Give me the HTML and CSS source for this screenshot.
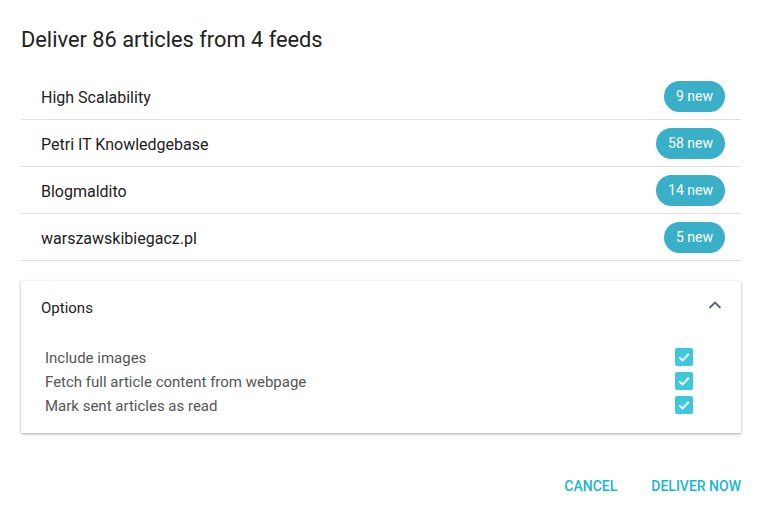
FILE: index.html
```html
<!DOCTYPE html>
<html>
<head>
<meta charset="utf-8">
<link rel="stylesheet" href="styles.css">
</head>
<body>
<div class="dialog">
  <h1 class="title">Deliver 86 articles from 4 feeds</h1>
  <ul class="feeds">
    <li class="feed"><span class="feed-name">High Scalability</span><span class="badge">9 new</span></li>
    <li class="feed"><span class="feed-name">Petri IT Knowledgebase</span><span class="badge">58 new</span></li>
    <li class="feed"><span class="feed-name">Blogmaldito</span><span class="badge">14 new</span></li>
    <li class="feed"><span class="feed-name">warszawskibiegacz.pl</span><span class="badge">5 new</span></li>
  </ul>
  <div class="card">
    <div class="card-head">
      <span class="card-title">Options</span>
      <svg class="chevron" width="14" height="10" viewBox="0 0 14 10"><path d="M1.5 8 L7 2.5 L12.5 8" fill="none" stroke="#5a6270" stroke-width="1.8"/></svg>
    </div>
    <div class="card-body">
      <div class="opt"><span>Include images</span><span class="check"><svg width="18" height="18" viewBox="0 0 18 18"><path d="M4.2 9.2 L7.5 12.4 L13.8 5.8" fill="none" stroke="#fff" stroke-width="2"/></svg></span></div>
      <div class="opt"><span>Fetch full article content from webpage</span><span class="check"><svg width="18" height="18" viewBox="0 0 18 18"><path d="M4.2 9.2 L7.5 12.4 L13.8 5.8" fill="none" stroke="#fff" stroke-width="2"/></svg></span></div>
      <div class="opt"><span>Mark sent articles as read</span><span class="check"><svg width="18" height="18" viewBox="0 0 18 18"><path d="M4.2 9.2 L7.5 12.4 L13.8 5.8" fill="none" stroke="#fff" stroke-width="2"/></svg></span></div>
    </div>
  </div>
  <div class="actions">
    <button class="btn">Cancel</button>
    <button class="btn">Deliver now</button>
  </div>
</div>
</body>
</html>
```
FILE: styles.css
```css
* { box-sizing: border-box; }
html, body { margin: 0; padding: 0; background: #fff; }
body { font-family: Roboto, "Liberation Sans", sans-serif; color: #212121; }
.dialog { padding: 27px 23px 0 21px; }
.title { margin: 0 0 20px; font-size: 21.8px; line-height: 26px; font-weight: 400; color: #212121; }
.feeds { list-style: none; margin: 0; padding: 0; }
.feed { display: flex; align-items: center; justify-content: space-between; height: 47px; padding: 1px 16px 1px 20px; border-bottom: 1px solid #e0e0e0; }
.feed-name { font-size: 16px; color: #212121; padding-top: 3px; }
.badge { background: #3ab0c8; color: #fff; font-size: 14px; height: 31px; line-height: 31px; padding: 0 12px; border-radius: 16px; }
.card { margin-top: 20px; box-shadow: 0 1px 3px rgba(0,0,0,0.25), 0 1px 2px rgba(0,0,0,0.12); }
.card-head { display: flex; align-items: center; justify-content: space-between; height: 54px; padding: 0 18px 0 20px; }
.card-title { font-size: 15px; color: #212121; }
.chevron { display: block; margin-top: -6px; margin-right: 1px; }
.card-body { padding: 10px 48px 16px 24px; }
.opt { display: flex; justify-content: space-between; align-items: center; height: 24px; font-size: 15px; color: #555; }
.opt span:first-child { padding-top: 2px; }
.check { width: 18px; height: 18px; background: #3ec8dc; border-radius: 2px; display: block; }
.check svg { display: block; }
.actions { display: flex; justify-content: flex-end; gap: 18px; margin-top: 35px; }
.btn { font-family: Roboto, "Liberation Sans", sans-serif; background: none; border: 0; padding: 0 0 0 8px; height: 36px; font-size: 14px; font-weight: 500; text-transform: uppercase; color: #17b7d7; cursor: pointer; }
.btn:first-child { padding: 0 8px; }
```
